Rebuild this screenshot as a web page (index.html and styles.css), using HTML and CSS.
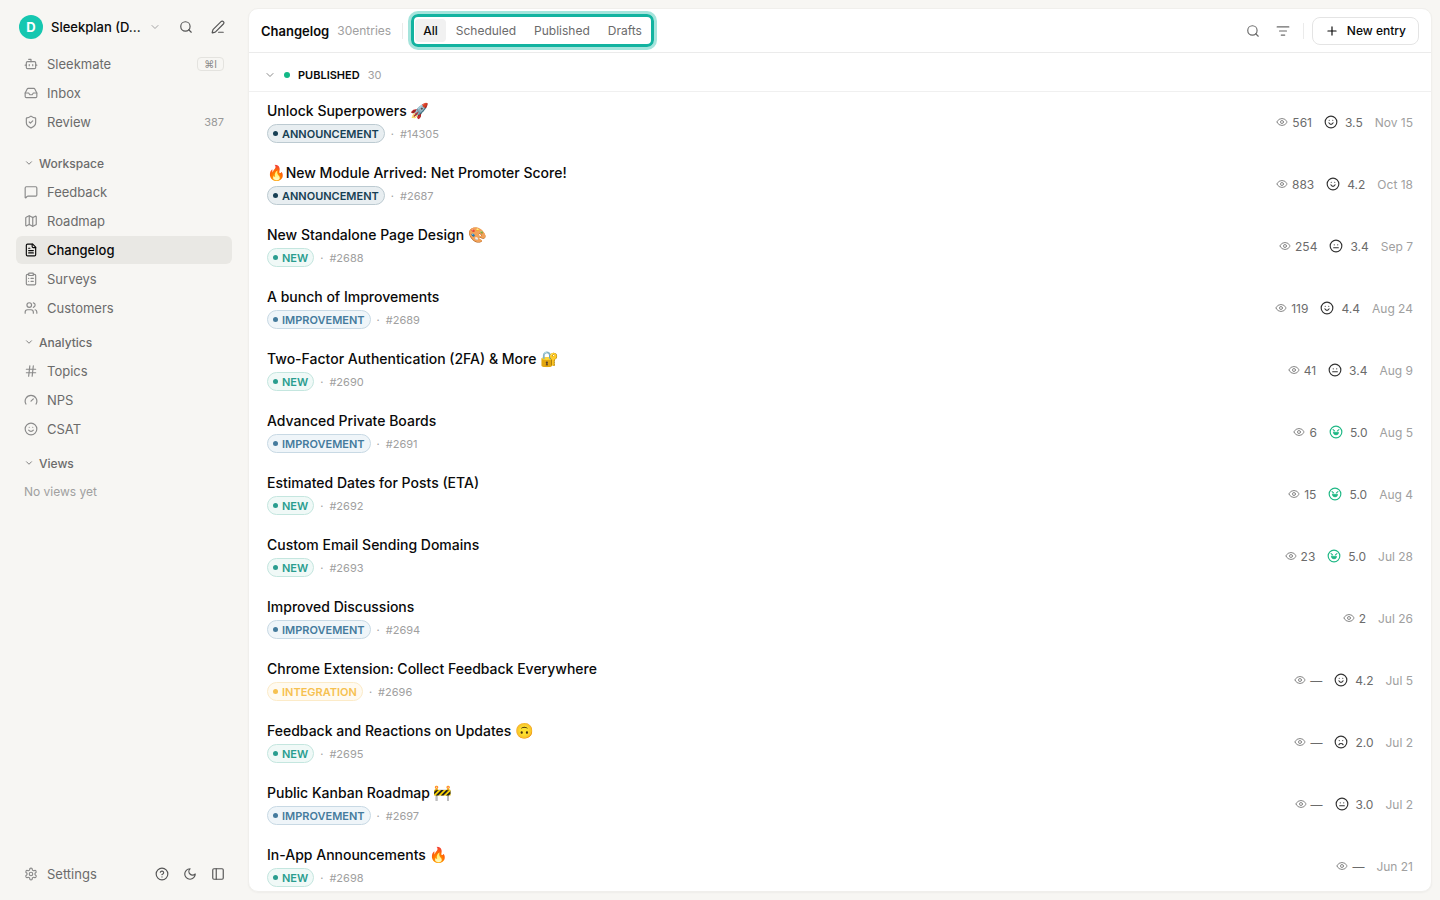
FILE: index.html
```html
<!DOCTYPE html>
<html lang="en">
<head>
  <meta charset="utf-8">
  <title>Changelog</title>
  <link rel="stylesheet" href="styles.css">
</head>
<body>
  <svg class="sprite" aria-hidden="true">
    <symbol id="i-search" viewBox="0 0 24 24"><circle cx="11" cy="11" r="8"/><path d="m21 21-4.3-4.3"/></symbol>
    <symbol id="i-pen" viewBox="0 0 24 24"><path d="M13 21h8"/><path d="M21.2 6.8a2.8 2.8 0 0 0-4-4L3.8 16.2a2 2 0 0 0-.5.8L2 21.4a.5.5 0 0 0 .6.6l4.4-1.3a2 2 0 0 0 .8-.5z"/></symbol>
    <symbol id="i-down" viewBox="0 0 24 24"><path d="m6 9 6 6 6-6"/></symbol>
    <symbol id="i-bot" viewBox="0 0 24 24"><path d="M12 8V4H8"/><rect width="16" height="12" x="4" y="8" rx="2"/><path d="M2 14h2M20 14h2M15 13v2M9 13v2"/></symbol>
    <symbol id="i-inbox" viewBox="0 0 24 24"><path d="M22 12h-6l-2 3h-4l-2-3H2"/><path d="M5.5 5.1 2 12v6a2 2 0 0 0 2 2h16a2 2 0 0 0 2-2v-6l-3.5-6.9A2 2 0 0 0 16.8 4H7.2a2 2 0 0 0-1.7 1.1z"/></symbol>
    <symbol id="i-shield" viewBox="0 0 24 24"><path d="M20 13c0 5-3.5 7.5-7.7 9a1 1 0 0 1-.6 0C7.5 20.5 4 18 4 13V6a1 1 0 0 1 1-1c2 0 4.5-1.2 6.2-2.7a1.2 1.2 0 0 1 1.5 0C14.5 3.8 17 5 19 5a1 1 0 0 1 1 1z"/><path d="m9 12 2 2 4-4"/></symbol>
    <symbol id="i-message" viewBox="0 0 24 24"><path d="M22 17a2 2 0 0 1-2 2H6.8a2 2 0 0 0-1.4.6l-2.2 2.2A.7.7 0 0 1 2 21.3V5a2 2 0 0 1 2-2h16a2 2 0 0 1 2 2z"/></symbol>
    <symbol id="i-map" viewBox="0 0 24 24"><path d="M14.1 5.6a2 2 0 0 0 1.8 0l3.7-1.9A1 1 0 0 1 21 4.6v12.8a1 1 0 0 1-.6.9l-4.5 2.2a2 2 0 0 1-1.8 0l-4.2-2.1a2 2 0 0 0-1.8 0l-3.7 1.9A1 1 0 0 1 3 19.4V6.6a1 1 0 0 1 .6-.9l4.5-2.2a2 2 0 0 1 1.8 0z"/><path d="M15 5.8v15M9 3.2v15"/></symbol>
    <symbol id="i-file" viewBox="0 0 24 24"><path d="M15 2H6a2 2 0 0 0-2 2v16a2 2 0 0 0 2 2h12a2 2 0 0 0 2-2V7z"/><path d="M14 2v4a2 2 0 0 0 2 2h4M10 9H8M16 13H8M16 17H8"/></symbol>
    <symbol id="i-clipboard" viewBox="0 0 24 24"><rect width="8" height="4" x="8" y="2" rx="1"/><path d="M16 4h2a2 2 0 0 1 2 2v14a2 2 0 0 1-2 2H6a2 2 0 0 1-2-2V6a2 2 0 0 1 2-2h2M12 11h4M12 16h4M8 11h.01M8 16h.01"/></symbol>
    <symbol id="i-users" viewBox="0 0 24 24"><path d="M16 21v-2a4 4 0 0 0-4-4H6a4 4 0 0 0-4 4v2"/><circle cx="9" cy="7" r="4"/><path d="M22 21v-2a4 4 0 0 0-3-3.9M16 3.1a4 4 0 0 1 0 7.8"/></symbol>
    <symbol id="i-hash" viewBox="0 0 24 24"><path d="M4 9h16M4 15h16M10 3 8 21M16 3l-2 18"/></symbol>
    <symbol id="i-gauge" viewBox="0 0 24 24"><path d="m12 14 4-4"/><path d="M3.3 19a10 10 0 1 1 17.4 0"/></symbol>
    <symbol id="i-smile" viewBox="0 0 24 24"><circle cx="12" cy="12" r="10"/><path d="M8 14s1.5 2 4 2 4-2 4-2M9 9h.01M15 9h.01"/></symbol>
    <symbol id="i-gear" viewBox="0 0 24 24"><path d="M12.2 2h-.4a2 2 0 0 0-2 2v.2a2 2 0 0 1-1 1.7l-.4.3a2 2 0 0 1-2 0l-.2-.1a2 2 0 0 0-2.7.7l-.2.4a2 2 0 0 0 .7 2.7l.2.1a2 2 0 0 1 1 1.7v.5a2 2 0 0 1-1 1.8l-.2.1a2 2 0 0 0-.7 2.7l.2.4a2 2 0 0 0 2.7.7l.2-.1a2 2 0 0 1 2 0l.4.3a2 2 0 0 1 1 1.7v.2a2 2 0 0 0 2 2h.4a2 2 0 0 0 2-2v-.2a2 2 0 0 1 1-1.7l.4-.3a2 2 0 0 1 2 0l.2.1a2 2 0 0 0 2.7-.7l.2-.4a2 2 0 0 0-.7-2.7l-.2-.1a2 2 0 0 1-1-1.8v-.5a2 2 0 0 1 1-1.7l.2-.1a2 2 0 0 0 .7-2.7l-.2-.4a2 2 0 0 0-2.7-.7l-.2.1a2 2 0 0 1-2 0l-.4-.3a2 2 0 0 1-1-1.7V4a2 2 0 0 0-2-2z"/><circle cx="12" cy="12" r="3"/></symbol>
    <symbol id="i-help" viewBox="0 0 24 24"><circle cx="12" cy="12" r="10"/><path d="M9.1 9a3 3 0 0 1 5.8 1c0 2-3 3-3 3M12 17h.01"/></symbol>
    <symbol id="i-moon" viewBox="0 0 24 24"><path d="M12 3a6 6 0 0 0 9 9 9 9 0 1 1-9-9"/></symbol>
    <symbol id="i-panel" viewBox="0 0 24 24"><rect width="18" height="18" x="3" y="3" rx="2"/><path d="M9 3v18"/></symbol>
    <symbol id="i-filter" viewBox="0 0 24 24"><path d="M2 5h20M6 12h12M9 19h6"/></symbol>
    <symbol id="i-plus" viewBox="0 0 24 24"><path d="M5 12h14M12 5v14"/></symbol>
    <symbol id="i-eye" viewBox="0 0 24 24"><path d="M2 12.3a1 1 0 0 1 0-.6 10.800 10.800 0 0 1 20 0 1 1 0 0 1 0 .6 10.800 10.800 0 0 1-20 0"/><circle cx="12" cy="12" r="3"/></symbol>
    <symbol id="i-good" viewBox="0 0 24 24"><circle cx="12" cy="12" r="10"/><path d="M8.500 13.500s1 2.500 3.500 2.500 3.500-2.500 3.500-2.500M9 9h.01M15 9h.01"/></symbol>
    <symbol id="i-neutral" viewBox="0 0 24 24"><circle cx="12" cy="12" r="10"/><path d="M8 15h8M9 10h.01M15 10h.01"/></symbol>
    <symbol id="i-bad" viewBox="0 0 24 24"><circle cx="12" cy="12" r="10"/><path d="M8.500 16.500s1-2 3.500-2 3.500 2 3.500 2M9 9.500h.01M15 9.500h.01"/></symbol>
    <symbol id="i-love" viewBox="0 0 24 24"><circle cx="12" cy="12" r="10"/><path d="m7 8 2.500 2M17 8l-2.500 2"/><path d="M7.500 12.500h9a4.500 4.500 0 0 1-9 0z" fill="currentColor" stroke-width="1"/></symbol>
  </svg>

  <div class="app">
    <aside class="sidebar">
      <div class="workspace">
        <button class="workspace-switch">
          <span class="avatar">D</span>
          <span class="workspace-name">Sleekplan (D...</span>
          <svg class="icon chevron"><use href="#i-down"/></svg>
        </button>
        <button class="icon-btn" aria-label="Search"><svg class="icon"><use href="#i-search"/></svg></button>
        <button class="icon-btn" aria-label="Compose"><svg class="icon"><use href="#i-pen"/></svg></button>
      </div>

      <nav class="nav">
        <a href="#"><svg class="icon"><use href="#i-bot"/></svg>Sleekmate<kbd>⌘I</kbd></a>
        <a href="#"><svg class="icon"><use href="#i-inbox"/></svg>Inbox</a>
        <a href="#"><svg class="icon"><use href="#i-shield"/></svg>Review<span class="count">387</span></a>
      </nav>

      <nav class="nav nav-first">
        <button class="nav-title"><svg class="icon"><use href="#i-down"/></svg>Workspace</button>
        <a href="#"><svg class="icon"><use href="#i-message"/></svg>Feedback</a>
        <a href="#"><svg class="icon"><use href="#i-map"/></svg>Roadmap</a>
        <a href="#" class="active"><svg class="icon"><use href="#i-file"/></svg>Changelog</a>
        <a href="#"><svg class="icon"><use href="#i-clipboard"/></svg>Surveys</a>
        <a href="#"><svg class="icon"><use href="#i-users"/></svg>Customers</a>
      </nav>

      <nav class="nav">
        <button class="nav-title"><svg class="icon"><use href="#i-down"/></svg>Analytics</button>
        <a href="#"><svg class="icon"><use href="#i-hash"/></svg>Topics</a>
        <a href="#"><svg class="icon"><use href="#i-gauge"/></svg>NPS</a>
        <a href="#"><svg class="icon"><use href="#i-smile"/></svg>CSAT</a>
      </nav>

      <nav class="nav">
        <button class="nav-title"><svg class="icon"><use href="#i-down"/></svg>Views</button>
        <p class="nav-empty">No views yet</p>
      </nav>

      <div class="sidebar-footer">
        <a href="#"><svg class="icon"><use href="#i-gear"/></svg>Settings</a>
        <button class="icon-btn" aria-label="Help"><svg class="icon"><use href="#i-help"/></svg></button>
        <button class="icon-btn" aria-label="Dark mode"><svg class="icon"><use href="#i-moon"/></svg></button>
        <button class="icon-btn" aria-label="Collapse sidebar"><svg class="icon"><use href="#i-panel"/></svg></button>
      </div>
    </aside>

    <main class="panel">
      <header class="toolbar">
        <h1>Changelog</h1>
        <span class="entries">30entries</span>
        <span class="divider"></span>
        <div class="tabs">
          <button class="tab selected">All</button>
          <button class="tab">Scheduled</button>
          <button class="tab">Published</button>
          <button class="tab">Drafts</button>
        </div>
        <div class="actions">
          <button class="icon-btn" aria-label="Search entries"><svg class="icon"><use href="#i-search"/></svg></button>
          <button class="icon-btn" aria-label="Filter"><svg class="icon"><use href="#i-filter"/></svg></button>
          <span class="divider"></span>
          <button class="new-entry"><svg class="icon"><use href="#i-plus"/></svg>New entry</button>
        </div>
      </header>

      <button class="group">
        <svg class="icon"><use href="#i-down"/></svg>
        <span class="dot"></span>
        <span class="group-name">PUBLISHED</span>
        <span class="group-count">30</span>
      </button>

      <ul class="entries-list">
        <li class="entry">
          <div class="entry-main">
            <h2>Unlock Superpowers <span class="emoji">🚀</span></h2>
            <p class="meta"><span class="badge announcement">ANNOUNCEMENT</span><span>·</span><span>#14305</span></p>
          </div>
          <div class="stats"><span class="views"><svg class="icon"><use href="#i-eye"/></svg>561</span><span class="score"><svg class="icon"><use href="#i-good"/></svg>3.5</span><time>Nov 15</time></div>
        </li>
        <li class="entry">
          <div class="entry-main">
            <h2><span class="emoji">🔥</span>New Module Arrived: Net Promoter Score!</h2>
            <p class="meta"><span class="badge announcement">ANNOUNCEMENT</span><span>·</span><span>#2687</span></p>
          </div>
          <div class="stats"><span class="views"><svg class="icon"><use href="#i-eye"/></svg>883</span><span class="score"><svg class="icon"><use href="#i-good"/></svg>4.2</span><time>Oct 18</time></div>
        </li>
        <li class="entry">
          <div class="entry-main">
            <h2>New Standalone Page Design <span class="emoji">🎨</span></h2>
            <p class="meta"><span class="badge new">NEW</span><span>·</span><span>#2688</span></p>
          </div>
          <div class="stats"><span class="views"><svg class="icon"><use href="#i-eye"/></svg>254</span><span class="score"><svg class="icon"><use href="#i-neutral"/></svg>3.4</span><time>Sep 7</time></div>
        </li>
        <li class="entry">
          <div class="entry-main">
            <h2>A bunch of Improvements</h2>
            <p class="meta"><span class="badge improvement">IMPROVEMENT</span><span>·</span><span>#2689</span></p>
          </div>
          <div class="stats"><span class="views"><svg class="icon"><use href="#i-eye"/></svg>119</span><span class="score"><svg class="icon"><use href="#i-good"/></svg>4.4</span><time>Aug 24</time></div>
        </li>
        <li class="entry">
          <div class="entry-main">
            <h2>Two-Factor Authentication (2FA) &amp; More <span class="emoji">🔐</span></h2>
            <p class="meta"><span class="badge new">NEW</span><span>·</span><span>#2690</span></p>
          </div>
          <div class="stats"><span class="views"><svg class="icon"><use href="#i-eye"/></svg>41</span><span class="score"><svg class="icon"><use href="#i-neutral"/></svg>3.4</span><time>Aug 9</time></div>
        </li>
        <li class="entry">
          <div class="entry-main">
            <h2>Advanced Private Boards</h2>
            <p class="meta"><span class="badge improvement">IMPROVEMENT</span><span>·</span><span>#2691</span></p>
          </div>
          <div class="stats"><span class="views"><svg class="icon"><use href="#i-eye"/></svg>6</span><span class="score top"><svg class="icon"><use href="#i-love"/></svg>5.0</span><time>Aug 5</time></div>
        </li>
        <li class="entry">
          <div class="entry-main">
            <h2>Estimated Dates for Posts (ETA)</h2>
            <p class="meta"><span class="badge new">NEW</span><span>·</span><span>#2692</span></p>
          </div>
          <div class="stats"><span class="views"><svg class="icon"><use href="#i-eye"/></svg>15</span><span class="score top"><svg class="icon"><use href="#i-love"/></svg>5.0</span><time>Aug 4</time></div>
        </li>
        <li class="entry">
          <div class="entry-main">
            <h2>Custom Email Sending Domains</h2>
            <p class="meta"><span class="badge new">NEW</span><span>·</span><span>#2693</span></p>
          </div>
          <div class="stats"><span class="views"><svg class="icon"><use href="#i-eye"/></svg>23</span><span class="score top"><svg class="icon"><use href="#i-love"/></svg>5.0</span><time>Jul 28</time></div>
        </li>
        <li class="entry">
          <div class="entry-main">
            <h2>Improved Discussions</h2>
            <p class="meta"><span class="badge improvement">IMPROVEMENT</span><span>·</span><span>#2694</span></p>
          </div>
          <div class="stats"><span class="views"><svg class="icon"><use href="#i-eye"/></svg>2</span><time>Jul 26</time></div>
        </li>
        <li class="entry">
          <div class="entry-main">
            <h2>Chrome Extension: Collect Feedback Everywhere</h2>
            <p class="meta"><span class="badge integration">INTEGRATION</span><span>·</span><span>#2696</span></p>
          </div>
          <div class="stats"><span class="views"><svg class="icon"><use href="#i-eye"/></svg>—</span><span class="score"><svg class="icon"><use href="#i-good"/></svg>4.2</span><time>Jul 5</time></div>
        </li>
        <li class="entry">
          <div class="entry-main">
            <h2>Feedback and Reactions on Updates <span class="emoji">🙃</span></h2>
            <p class="meta"><span class="badge new">NEW</span><span>·</span><span>#2695</span></p>
          </div>
          <div class="stats"><span class="views"><svg class="icon"><use href="#i-eye"/></svg>—</span><span class="score"><svg class="icon"><use href="#i-bad"/></svg>2.0</span><time>Jul 2</time></div>
        </li>
        <li class="entry">
          <div class="entry-main">
            <h2>Public Kanban Roadmap <span class="emoji">🚧</span></h2>
            <p class="meta"><span class="badge improvement">IMPROVEMENT</span><span>·</span><span>#2697</span></p>
          </div>
          <div class="stats"><span class="views"><svg class="icon"><use href="#i-eye"/></svg>—</span><span class="score"><svg class="icon"><use href="#i-neutral"/></svg>3.0</span><time>Jul 2</time></div>
        </li>
        <li class="entry">
          <div class="entry-main">
            <h2>In-App Announcements <span class="emoji">🔥</span></h2>
            <p class="meta"><span class="badge new">NEW</span><span>·</span><span>#2698</span></p>
          </div>
          <div class="stats"><span class="views"><svg class="icon"><use href="#i-eye"/></svg>—</span><time>Jun 21</time></div>
        </li>
      </ul>
    </main>
  </div>
</body>
</html>
```
FILE: styles.css
```css
* {
  box-sizing: border-box;
}
body {
  margin: 0;
  background-color: #f7f6f3;
  color: #0a0a0a;
  font-family: Inter, "Noto Color Emoji", sans-serif;
  font-size: 13px;
}
h1, h2, p, ul {
  margin: 0;
  padding: 0;
}
button {
  padding: 0;
  border: none;
  background: none;
  color: inherit;
  font: inherit;
  cursor: pointer;
}
a {
  color: inherit;
  text-decoration: none;
}
.sprite {
  display: none;
}
.icon {
  width: 14px;
  height: 14px;
  flex: none;
  fill: none;
  stroke: currentColor;
  stroke-width: 2;
  stroke-linecap: round;
  stroke-linejoin: round;
}
.app {
  display: flex;
  height: 100vh;
}

/* sidebar */
.sidebar {
  width: 248px;
  flex: none;
  display: flex;
  flex-direction: column;
  gap: 6px;
  padding: 12px 16px;
  color: #6b6b6b;
}
.workspace {
  display: flex;
  align-items: center;
  margin-bottom: 2px;
  padding-left: 3px;
}
.workspace-switch {
  flex: 1;
  display: flex;
  align-items: center;
  gap: 8px;
  height: 30px;
  color: #0a0a0a;
  font-weight: 500;
}
.avatar {
  width: 24px;
  height: 24px;
  border-radius: 50%;
  background-color: #16c7b0;
  color: #fff;
  font-weight: 700;
  line-height: 24px;
}
.workspace-name {
  white-space: nowrap;
}
.chevron {
  width: 12px;
  height: 12px;
  color: #a3a3a3;
}
.icon-btn {
  display: flex;
  align-items: center;
  justify-content: center;
  width: 28px;
  height: 28px;
  color: #555;
}
.workspace .icon-btn {
  margin-left: 4px;
}
.nav {
  display: flex;
  flex-direction: column;
  gap: 1px;
}
.nav-first {
  margin-top: 7px;
}
.nav a, .sidebar-footer a {
  display: flex;
  align-items: center;
  gap: 9px;
  height: 28px;
  padding: 0 8px;
  border-radius: 6px;
}
.nav a .icon, .sidebar-footer a .icon {
  color: #8a8a8a;
}
.nav .active {
  background-color: #e9e8e4;
  color: #0a0a0a;
  font-weight: 500;
}
.nav .active .icon {
  color: #0a0a0a;
}
kbd {
  margin-left: auto;
  padding: 0 6px;
  border: 1px solid #e4e3df;
  border-radius: 4px;
  color: #8a8a8a;
  font-family: inherit;
  font-size: 10px;
  line-height: 12px;
}
.count {
  margin-left: auto;
  color: #999;
  font-size: 11px;
}
.nav-title {
  display: flex;
  align-items: center;
  gap: 5px;
  height: 28px;
  padding: 0 8px;
  font-size: 12px;
  font-weight: 500;
}
.nav-title .icon {
  width: 10px;
  height: 10px;
}
.nav-empty {
  padding: 0 8px;
  color: #a0a0a0;
  font-size: 12px;
  line-height: 28px;
}
.sidebar-footer {
  display: flex;
  align-items: center;
  margin-top: auto;
}
.sidebar-footer a {
  flex: 1;
}

/* main panel */
.panel {
  flex: 1;
  min-width: 0;
  display: flex;
  flex-direction: column;
  margin: 8px 8px 8px 0;
  border: 1px solid #f0efec;
  border-radius: 10px;
  background-color: #fff;
  box-shadow: 0 1px 2px rgba(0, 0, 0, 0.04);
  overflow: hidden;
}
.toolbar {
  display: flex;
  align-items: center;
  flex: none;
  height: 44px;
  padding: 0 12px;
  border-bottom: 1px solid #ebebeb;
}
h1 {
  font-size: 13px;
  font-weight: 600;
}
.entries {
  margin-left: 8px;
  color: #a0a0a0;
  font-size: 12px;
}
.divider {
  width: 1px;
  height: 16px;
  margin: 0 8px 0 11px;
  background-color: #ebebeb;
}
.tabs {
  display: flex;
  gap: 2px;
  padding: 2px 1px;
  border: 3px solid #12b3a0;
  border-radius: 7px;
  box-shadow: 0 0 0 3px #a5e4dc;
}
.tab {
  height: 23px;
  padding: 0 8px;
  border-radius: 4px;
  color: #6b6b6b;
  font-size: 12px;
}
.tab.selected {
  background-color: #f1f1f1;
  color: #0a0a0a;
  font-weight: 500;
}
.actions {
  display: flex;
  align-items: center;
  gap: 2px;
  margin-left: auto;
}
.actions .icon-btn {
  color: #6b6b6b;
}
.actions .divider {
  margin: 0 6px 0 4px;
}
.new-entry {
  display: flex;
  align-items: center;
  gap: 8px;
  height: 28px;
  padding: 0 12px;
  border: 1px solid #e4e4e4;
  border-radius: 8px;
  font-size: 12px;
  font-weight: 500;
}
.group {
  display: flex;
  align-items: center;
  flex: none;
  height: 39px;
  padding: 5px 15px 0;
  border-bottom: 1px solid #f0f0f0;
  font-size: 11px;
}
.group .icon {
  width: 12px;
  height: 12px;
  color: #8a8a8a;
}
.dot {
  width: 6px;
  height: 6px;
  margin: 0 8px;
  border-radius: 50%;
  background-color: #12b886;
}
.group-name {
  font-weight: 600;
}
.group-count {
  margin-left: 8px;
  color: #a0a0a0;
}
.entries-list {
  flex: 1;
  min-height: 0;
  overflow: hidden;
  list-style: none;
}
.entry {
  display: flex;
  align-items: center;
  justify-content: space-between;
  height: 62px;
  padding: 0 18px 2px;
}
h2 {
  height: 20px;
  font-size: 14px;
  font-weight: 500;
  line-height: 20px;
}
.emoji {
  font-size: 15px;
}
.meta {
  display: flex;
  align-items: center;
  gap: 6px;
  margin-top: 3px;
  color: #a0a0a0;
  font-size: 11px;
}
.badge {
  display: flex;
  align-items: center;
  gap: 4px;
  height: 19px;
  padding: 0 5px;
  border: 1px solid;
  border-radius: 10px;
  font-weight: 600;
}
.badge::before {
  content: "";
  width: 5px;
  height: 5px;
  border-radius: 50%;
  background-color: currentColor;
}
.announcement {
  border-color: #bccad1;
  background-color: #e8eef1;
  color: #173f54;
}
.new {
  border-color: #c4e6df;
  background-color: #f0f9f7;
  color: #2a9d8f;
}
.improvement {
  border-color: #c8d9e4;
  background-color: #eff5f9;
  color: #457b9d;
}
.integration {
  border-color: #fcebc8;
  background-color: #fffaf0;
  color: #f6c150;
}
.stats {
  display: flex;
  align-items: center;
  gap: 12px;
  color: #6b6b6b;
  font-size: 12px;
}
.views, .score {
  display: flex;
  align-items: center;
}
.views {
  gap: 4px;
}
.views .icon {
  width: 12px;
  height: 12px;
  color: #8a8a8a;
}
.score {
  gap: 7px;
}
.score .icon {
  color: #333;
}
.score.top .icon {
  color: #1fb885;
}
time {
  color: #a0a0a0;
}
```
